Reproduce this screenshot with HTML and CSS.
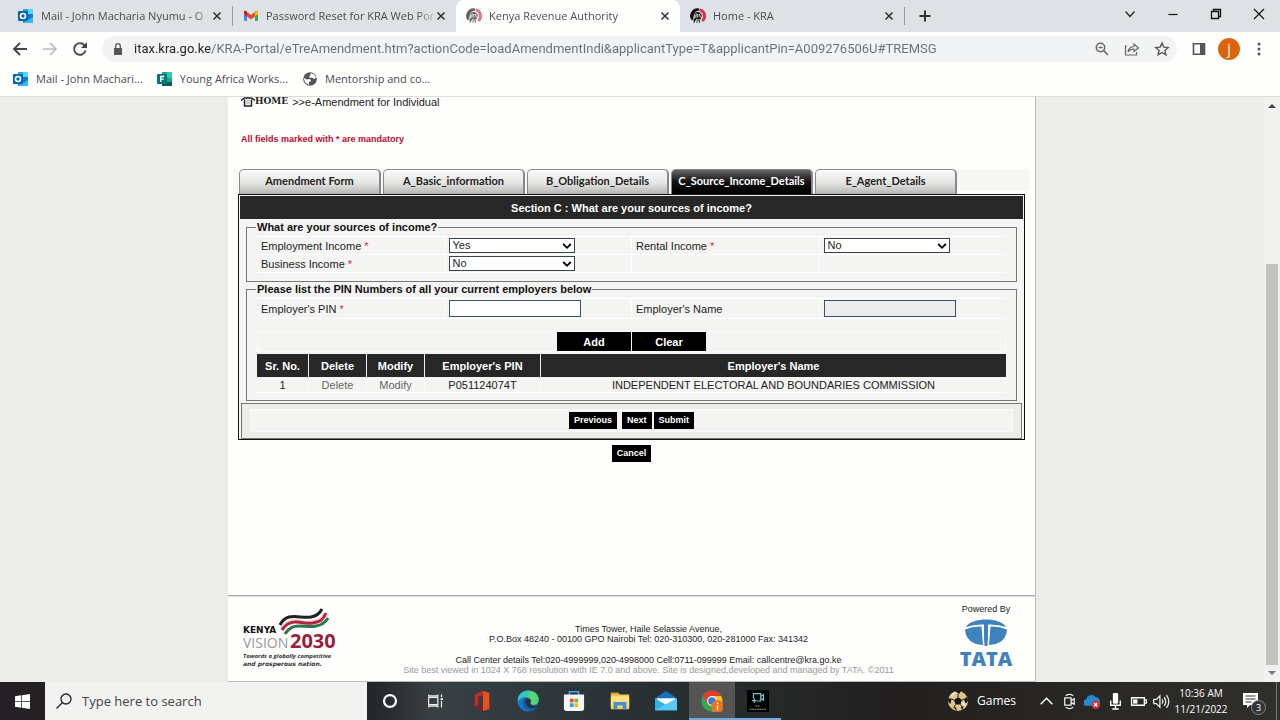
FILE: index.html
```html
<!DOCTYPE html>
<html lang="en">
<head>
<meta charset="utf-8">
<meta name="viewport" content="width=device-width, initial-scale=1">
<title>Kenya Revenue Authority</title>
<link rel="stylesheet" href="styles.css">
</head>
<body>
<svg class="defs" aria-hidden="true">
  <symbol id="outlook" viewBox="0 0 16 16">
    <path d="M5 1h10v14H5z" fill="#1490df"/><path d="M10 1h5v5h-5z" fill="#50d9ff"/><path d="M5 1h5v5H5z" fill="#28a8ea"/><path d="M10 6h5v5h-5z" fill="#0f78d4"/><path d="M5 15l10-6v6z" fill="#35b8f1"/>
    <rect y="3" width="10" height="10" rx="1" fill="#0364b8"/><circle cx="5" cy="8" r="2.5" fill="none" stroke="#fff" stroke-width="1.6"/>
  </symbol>
  <symbol id="kra" viewBox="0 0 16 16">
    <path d="M9 .5A7.500 7.500 0 0 0 2 12.800L3.500 10 4 6.500 6 3.500 9 2.500z" fill="#111"/>
    <path d="M9.500 .5a7.500 7.500 0 0 1 3.500 13.500L11.500 12l1.500-3-.5-3.500L9.500 3z" fill="#d8304f"/>
    <path d="M5 5.500 6.500 4 9 4l2.500 2.500L12 9l-1.500-.5.5 3-1.500-1 .5 5-2-3-1 3-1-3-2.500 3 .5-4L3 13z" fill="#111"/>
    <path d="M4.800 7 3.800 11M6.300 5.500 5.800 10m2-4v3.500M9.300 6l1 3M6.500 11l-.8 3m2.300-3v3" stroke="#fff" stroke-width=".9" fill="none"/>
  </symbol>
  <symbol id="cross" viewBox="0 0 10 10"><path d="M1.500 1.500l7 7m0-7l-7 7" stroke="currentColor" stroke-width="1.600" fill="none"/></symbol>
  <symbol id="arrow" viewBox="0 0 10 8"><path d="M1.200 2 5 5.800 8.800 2" stroke="#000" stroke-width="1.800" fill="none"/></symbol>
</svg>

<header class="tabstrip">
  <div class="tab"><svg class="i16"><use href="#outlook"/></svg><span class="tab-title">Mail - John Macharia Nyumu - O</span><button class="close" aria-label="Close tab"><svg><use href="#cross"/></svg></button></div>
  <div class="tab split"><svg class="i16" viewBox="0 0 16 16"><path d="M1 3h3v10H2a1 1 0 0 1-1-1z" fill="#4285f4"/><path d="M12 3h3v9a1 1 0 0 1-1 1h-2z" fill="#34a853"/><path d="M12 4l1.300-1q1.700-.6 1.700 1v2l-3 2.500z" fill="#fbbc04"/><path d="M1 6V4q0-1.600 1.700-1L8 7l4-3v4.500L8 11.500 4 8.500z" fill="#ea4335"/><path d="M1 6V4q0-1.600 1.700-1L4 4v4.500z" fill="#c5221f"/></svg><span class="tab-title">Password Reset for KRA Web Por</span><button class="close" aria-label="Close tab"><svg><use href="#cross"/></svg></button></div>
  <div class="tab active"><svg class="i16 faded"><use href="#kra"/></svg><span class="tab-title">Kenya Revenue Authority</span><button class="close" aria-label="Close tab"><svg><use href="#cross"/></svg></button></div>
  <div class="tab"><svg class="i16"><use href="#kra"/></svg><span class="tab-title">Home - KRA</span><button class="close" aria-label="Close tab"><svg><use href="#cross"/></svg></button></div>
  <button class="newtab" aria-label="New tab"><svg viewBox="0 0 12 12"><path d="M6 .5v11M.5 6h11" stroke="#333" stroke-width="2"/></svg></button>
  <div class="window-buttons">
    <button aria-label="Search tabs"><svg viewBox="0 0 12 12"><path d="M1.500 3.500 6 8.500l4.500-5" fill="none" stroke="#222" stroke-width="1.200"/></svg></button>
    <button aria-label="Minimize"><svg viewBox="0 0 12 12"><path d="M1.500 6.500h9" stroke="#111" stroke-width="1.200"/></svg></button>
    <button aria-label="Restore"><svg viewBox="0 0 12 12"><path d="M1.500 3.500h7v7h-7zM3.500 3.500v-2h7v7h-2" fill="none" stroke="#111" stroke-width="1.300"/></svg></button>
    <button aria-label="Close"><svg viewBox="0 0 12 12"><path d="M1 1l10 10M11 1 1 11" stroke="#111" stroke-width="1.200"/></svg></button>
  </div>
</header>

<nav class="toolbar">
  <button aria-label="Back"><svg viewBox="0 0 16 16"><path d="M15 8H2.500M8 2 2 8l6 6" fill="none" stroke="#444" stroke-width="1.800"/></svg></button>
  <button aria-label="Forward"><svg viewBox="0 0 16 16"><path d="M1 8h12.500M8 2l6 6-6 6" fill="none" stroke="#bbb" stroke-width="1.600"/></svg></button>
  <button aria-label="Reload"><svg viewBox="0 0 16 16"><path d="M13.500 9.500A5.800 5.800 0 1 1 12.400 4.300L14 6" fill="none" stroke="#444" stroke-width="1.900"/><path d="M15 1v6H9z" fill="#444"/></svg></button>
  <div class="omnibox">
    <svg class="lock" viewBox="0 0 10 12"><path d="M1 5h8v7H1z" fill="#555"/><path d="M2.700 5V3a2.300 2.300 0 0 1 4.600 0v2" fill="none" stroke="#555" stroke-width="1.300"/></svg>
    <input class="url" aria-label="Address" value="itax.kra.go.ke/KRA-Portal/eTreAmendment.htm?actionCode=loadAmendmentIndi&amp;applicantType=T&amp;applicantPin=A009276506U#TREMSG">
    <button aria-label="Zoom"><svg viewBox="0 0 16 16"><circle cx="6.500" cy="6.500" r="4.200" fill="none" stroke="#666" stroke-width="1.500"/><path d="M9.800 9.800 14 14M4.500 6.500h4" stroke="#666" stroke-width="1.600"/></svg></button>
    <button aria-label="Share"><svg viewBox="0 0 16 16"><path d="M3 5H1.500v9h11v-3M4 11q.5-5 6-5.500V3l4.500 4L10 10.500V8Q6 8 4 11z" fill="none" stroke="#666" stroke-width="1.200"/></svg></button>
    <button aria-label="Bookmark"><svg viewBox="0 0 16 16"><path d="M8 2l1.800 4.100 4.400.4-3.300 3 1 4.300L8 11.500l-3.900 2.300 1-4.300-3.300-3 4.400-.4z" fill="none" stroke="#555" stroke-width="1.400"/></svg></button>
  </div>
  <button aria-label="Side panel"><svg viewBox="0 0 16 16"><path d="M2.500 2.800h11v10.400h-11z" fill="none" stroke="#555" stroke-width="1.600"/><path d="M9 2h5v12H9z" fill="#555"/></svg></button>
  <button class="avatar" aria-label="Profile">j</button>
  <button class="more" aria-label="Menu"><svg viewBox="0 0 16 16"><g fill="#555"><circle cx="8" cy="3" r="1.500"/><circle cx="8" cy="8" r="1.500"/><circle cx="8" cy="13" r="1.500"/></g></svg></button>
</nav>

<nav class="bookmarks">
  <a href="#"><svg class="i16"><use href="#outlook"/></svg>Mail - John Machari...</a>
  <a href="#"><svg class="i16" viewBox="0 0 16 16"><path d="M5 1h10v14H5z" fill="#1fa187"/><path d="M10 1h5v6h-5z" fill="#37c6a2"/><path d="M5 11h10v4H5z" fill="#085d53"/><rect y="3" width="10" height="10" rx="1" fill="#03787c"/><path d="M3.700 11V5.500h3.500M3.700 8.200h3" stroke="#fff" stroke-width="1.300" fill="none"/></svg>Young Africa Works...</a>
  <a href="#"><svg class="i16" viewBox="0 0 16 16"><circle cx="8" cy="8" r="6.800" fill="#555"/><path d="M2 7l3 1.500 3-.5 1 2-2 1v2.500Q2 12.500 2 7zM8 2.500Q12.500 2 14 6.500L12 8l-2-1.500-2 .5-1-1.500 1.500-1z" fill="#fff"/></svg>Mentorship and co...</a>
</nav>

<div class="viewport">
  <main class="page">
    <section class="content">
      <div class="crumb"><svg viewBox="0 0 14 10"><path d="M0 3.500 3.500 1h7L14 3.500M3.500 2.500v6.500h7V2.500" fill="none" stroke="#222" stroke-width="1.500"/><path d="M5 2.500h4v5H5z" fill="#ccc"/></svg><a href="#" class="home">HOME</a><span>&gt;&gt;e-Amendment for Individual</span></div>
      <p class="mandatory">All fields marked with * are mandatory</p>

      <div class="form-tabs">
        <button>Amendment Form</button>
        <button>A_Basic_information</button>
        <button>B_Obligation_Details</button>
        <button class="current">C_Source_Income_Details</button>
        <button>E_Agent_Details</button>
      </div>

      <form class="panel">
        <h1>Section C : What are your sources of income?</h1>
        <fieldset class="income">
          <legend>What are your sources of income?</legend>
          <div class="grid">
            <div><label for="emp">Employment Income <b>*</b></label></div>
            <div><span class="pick"><select id="emp"><option>Yes</option><option>No</option></select><svg><use href="#arrow"/></svg></span></div>
            <div><label for="rent">Rental Income <b>*</b></label></div>
            <div><span class="pick"><select id="rent"><option>No</option><option>Yes</option></select><svg><use href="#arrow"/></svg></span></div>
            <div><label for="bus">Business Income <b>*</b></label></div>
            <div><span class="pick"><select id="bus"><option>No</option><option>Yes</option></select><svg><use href="#arrow"/></svg></span></div>
            <div></div>
            <div></div>
          </div>
        </fieldset>
        <fieldset class="employers">
          <legend>Please list the PIN Numbers of all your current employers below</legend>
          <div class="grid tall">
            <div><label for="pin">Employer's PIN <b>*</b></label></div>
            <div><input id="pin" type="text"></div>
            <div><label for="ename">Employer's Name</label></div>
            <div><input id="ename" type="text" class="locked" readonly></div>
          </div>
          <div class="actions"><button type="button">Add</button><button type="button">Clear</button></div>
          <table>
            <colgroup><col class="c1"><col class="c2"><col class="c2"><col class="c3"><col></colgroup>
            <thead><tr><th>Sr. No.</th><th>Delete</th><th>Modify</th><th>Employer's PIN</th><th>Employer's Name</th></tr></thead>
            <tbody><tr><td>1</td><td><a href="#">Delete</a></td><td><a href="#">Modify</a></td><td>P051124074T</td><td>INDEPENDENT ELECTORAL AND BOUNDARIES COMMISSION</td></tr></tbody>
          </table>
        </fieldset>
        <div class="nav-row"><div><button type="button" class="prev">Previous</button><button type="button">Next</button><button type="button">Submit</button></div></div>
      </form>
      <div class="cancel"><button type="button">Cancel</button></div>
    </section>

    <footer class="footer">
      <svg class="vision" viewBox="0 0 98 62" role="img" aria-label="Kenya Vision 2030">
        <g fill="none">
          <path d="M37 17c7-14 20-6 31-8 6-1 9-4 11-8" stroke="#222" stroke-width="3"/>
          <path d="M38 20c9-14 21-5 31-7 6-1 9-3 12-8" stroke="#e3b5bb" stroke-width="1"/>
          <path d="M39 22c9-14 21-5 31-7 7-1 10-3 13-10" stroke="#b8223c" stroke-width="3"/>
          <path d="M42 26c9-14 21-5 31-8 6-1 9-3 12-8" stroke="#287a4a" stroke-width="3"/>
        </g>
        <text x="0" y="25" class="kenya">KENYA</text>
        <text x="0" y="40" class="vis">VISION</text>
        <text x="47" y="40" class="year">2030</text>
        <text x="0" y="50" class="motto">Towards a globally competitive</text>
        <text x="0" y="58" class="motto wide">and prosperous nation.</text>
      </svg>
      <div class="address">
        <p>Times Tower, Haile Selassie Avenue,</p>
        <p>P.O.Box 48240 - 00100 GPO Nairobi Tel: 020-310300, 020-281000 Fax: 341342</p>
        <p class="gap">Call Center details Tel:020-4999999,020-4998000 Cell:0711-099999 Email: callcentre@kra.go.ke</p>
        <p class="dim">Site best viewed in 1024 X 768 resolution with IE 7.0 and above. Site is designed,developed and managed by TATA. ©2011</p>
      </div>
      <div class="powered">
        <span>Powered By</span>
        <svg viewBox="0 0 60 58" role="img" aria-label="TATA">
          <path d="M10 10C15 0 45 0 50 10q-9-3-18-2.500V28q0 1-2 1t-2-1V7.500Q19 7 10 10z" fill="#3f82bd"/>
          <path d="M9 12.500q8-3.500 16.500-3L27 28Q10 27 9 12.500zM51 12.500q-8-3.500-16.500-3L33 28q17-1 18-15.500z" fill="#3f82bd"/>
          <path d="M26.800 9.500 28 28.500M33.200 9.500 32 28.500" stroke="#fff" stroke-width="1"/>
          <text x="30" y="49" class="tata">TATA</text>
        </svg>
      </div>
    </footer>
  </main>
  <div class="scroll"><svg viewBox="0 0 8 5"><path d="M0 5l4-4 4 4z" fill="#444"/></svg><div class="track"><div class="thumb"></div></div><svg viewBox="0 0 8 5"><path d="M0 0l4 4 4-4z" fill="#777"/></svg></div>
</div>

<footer class="taskbar">
  <button class="start" aria-label="Start"><svg viewBox="0 0 16 16"><path d="M0 2.300 6.500 1.400v6.200H0zM7.300 1.300 16 0v7.600H7.300zM0 8.400h6.500v6.200L0 13.700zM7.300 8.400H16V16l-8.700-1.300z" fill="#fff"/></svg></button>
  <label class="search"><svg viewBox="0 0 16 16"><circle cx="10" cy="6" r="5" fill="none" stroke="#222" stroke-width="1.300"/><path d="M6.500 9.500.5 15.500" stroke="#222" stroke-width="1.300"/></svg><input type="text" placeholder="Type here to search" aria-label="Search"></label>
  <div class="apps">
    <button aria-label="Cortana"><svg viewBox="0 0 24 24"><circle cx="12" cy="12" r="6.500" fill="none" stroke="#fff" stroke-width="2.400"/></svg></button>
    <button aria-label="Task view"><svg viewBox="0 0 24 24"><path d="M4 8h10v8H4zM4 5v1.500h10V5M4 19v-1.500h10V19M18 5v3m0 4v7" fill="none" stroke="#eee" stroke-width="1.300"/><path d="M17 9h2.500v2H17z" fill="#fff"/></svg></button>
    <button aria-label="Office"><svg viewBox="0 0 24 24"><path d="M13 1l7 2v18l-7 2z" fill="#e8501e"/><path d="M13 1 4 5v13l4-2V7l5-1.500z" fill="#c52c24"/><path d="M4 18l9 5v-3l-7-3z" fill="#a31520"/></svg></button>
    <button aria-label="Edge"><svg viewBox="0 0 24 24"><circle cx="12" cy="12" r="11.500" fill="#1777c9"/><path d="M1 9C4-3 24-2 23.500 11c0 5-6 6-8.500 4 2-4-1-7-5-7-4 0-8 2-9.200 5z" fill="#37c5bd"/><path d="M14 1c7 1 10 6 9.500 10 0 5-6 6-8.500 4 2-4-1-6-4-7z" fill="#55d675"/><path d="M8 9c-5 6 0 14 8 13.500 3-.5 5-2 6-4-5 2-10 0-11-4-.5-3 1-4 2-4.500z" fill="#155ca8"/><path d="M11 9c-3 2-2 8 2 10 3 1 6 1 9-1 1-2 0-1-1-1-4 1-8-2-6-4 1-3-2-4-4-4z" fill="#263238"/></svg></button>
    <button aria-label="Store"><svg viewBox="0 0 24 24"><path d="M7 6V2h10v4" fill="none" stroke="#3aaee5" stroke-width="1.600"/><path d="M1 5h22v15q0 3-3 3H4q-3 0-3-3z" fill="#f5f5f5"/><path d="M7.500 9.500h4v4h-4z" fill="#e74c25"/><path d="M12.500 9.500h4v4h-4z" fill="#7bb52d"/><path d="M7.500 14.500h4v4h-4z" fill="#2a9fe0"/><path d="M12.500 14.500h4v4h-4z" fill="#f5b700"/></svg></button>
    <button aria-label="File Explorer"><svg viewBox="0 0 24 24"><path d="M2 3h8l2 2h10v16H2z" fill="#f3ca55"/><path d="M2 3h8l1 2H2z" fill="#d79d21"/><path d="M2 7h20v11H2z" fill="#ffdf7d"/><path d="M5 13h14v8h-4v-4H9v4H5z" fill="#3f92cf"/></svg></button>
    <button aria-label="Mail"><svg viewBox="0 0 24 24"><path d="M0 9 12 1l12 8v13H0z" fill="#1570bd"/><path d="M2 9h20v8H2z" fill="#fff"/><path d="M0 9l12 7 12-7v13H0z" fill="#31b2e9"/><path d="M0 22 24 9v13z" fill="#57c9f5"/></svg></button>
    <button class="open lit" aria-label="Chrome"><svg viewBox="0 0 24 24"><circle cx="12" cy="12" r="11.500" fill="#35a853"/><path d="M2 6.300A11.500 11.500 0 0 1 22 6.500L12 12l-5 3z" fill="#e33b2e"/><path d="M12 6.500h10A11.500 11.500 0 0 1 12 23.500l5-9z" fill="#fbc116"/><circle cx="12" cy="12" r="5.400" fill="#fff"/><circle cx="12" cy="12" r="4.200" fill="#3478e5"/><circle cx="18" cy="18" r="7" fill="#e87517"/><path d="M18 17v5" stroke="#fff" stroke-width="1.600"/><circle cx="18" cy="14.500" r="1" fill="#fff"/></svg></button>
    <button class="open" aria-label="Screen Recorder"><svg viewBox="0 0 24 24"><path d="M0 0h24v24H0z" fill="#000"/><path d="M7 9V4h8v8h-4m4-5 3-2v6l-3-2M8 9v5M5.500 11.500h5" fill="none" stroke="#6cc9d3" stroke-width="1.300"/><path d="M9 17.500h5M3 21h18" stroke="#aaa" stroke-width="1" stroke-dasharray="2 .6"/></svg></button>
  </div>
  <div class="tray">
    <button class="games"><svg viewBox="0 0 22 22"><circle cx="11" cy="11" r="10" fill="#dfc68c"/><path d="M11 7l4 3-1.500 4.500h-5L7 10zM8 1h6l-2 3zM1.500 8l3 1-1 5Q0 11 1.500 8zM20 7l-3 2 1.500 5 2.500-3zM6 17l3 .5 1 3.500zM14 17l3-1-2 4.500z" fill="#171717"/><path d="M11 4v3M7 10l-3-1m11 1 2-1m-3.500 5.500L15 17m-6.500-2.500L7 17" stroke="#222" stroke-width="1"/><path d="M3 5q4-4 7-3L5 7zM14 12l6 1-3 5z" fill="#fff" opacity=".5"/></svg>Games</button>
    <div class="status">
      <svg viewBox="0 0 16 16"><path d="M2.500 10.500 8 5l5.500 5.500" fill="none" stroke="#fff" stroke-width="1.400"/></svg>
      <svg viewBox="0 0 16 16"><path d="M3.500 4.500h6v7h-6zm6 2.500 3-1.500v5L9.500 9M4.500 2.500Q8 0 11.500 2.500m-7 11Q8 16 11.500 13.500" fill="none" stroke="#eee" stroke-width="1.200"/></svg>
      <svg viewBox="0 0 16 16"><path d="M2 12a3 3 0 0 1 0-6 5 5 0 0 1 9-2q4 0 4 5v3z" fill="#238bd2"/><circle cx="11" cy="11" r="4" fill="#d92e35"/><path d="M9.500 9.500l3 3m0-3-3 3" stroke="#fff" stroke-width="1.200"/></svg>
      <svg viewBox="0 0 16 16"><rect x="5.500" y="0" width="5" height="10" rx="1" fill="#fff"/><path d="M3.500 7v4.500h9V7M8 12v3M5 15h6" fill="none" stroke="#fff" stroke-width="1.300"/></svg>
      <svg viewBox="0 0 16 16"><path d="M1.500 4.500h12v7h-12zM14 6.500h1.500v3H14" fill="none" stroke="#fff" stroke-width="1.300"/><path d="M3 6h4v4H3z" fill="#fff"/></svg>
      <svg viewBox="0 0 16 16"><path d="M.7 6h2.500L6.500 2.700v10.600L3.200 10H.7zM8.500 6q1.500 2 0 4m2-6q3 4 0 8m2.200-10q4.300 6 0 12" fill="none" stroke="#eee" stroke-width="1.200"/></svg>
    </div>
    <div class="clock"><time>10:36 AM</time><time>11/21/2022</time></div>
    <button class="notice" aria-label="3 notifications"><svg viewBox="0 0 18 18"><path d="M1 1h15v12H8l-3 3v-3H1z" fill="#fff"/><path d="M3.500 4h10m-10 3h10m-10 3h6" stroke="#333" stroke-width="1"/></svg><span>3</span></button>
  </div>
</footer>
</body>
</html>
```
FILE: styles.css
```css
* { box-sizing: border-box; }
html, body { height: 100%; }
body { margin: 0; display: flex; flex-direction: column; overflow: hidden; background: #fefefc; color: #222; font: 11px/16px "Liberation Sans", Arial, sans-serif; }
button { margin: 0; padding: 0; border: 0; background: none; color: inherit; font: inherit; }
svg { display: block; flex: none; }
a { color: inherit; text-decoration: none; }
p, h1 { margin: 0; }
.defs { position: absolute; width: 0; height: 0; }
.i16 { width: 16px; height: 16px; }
.faded { opacity: .65; }

.tabstrip, .toolbar, .bookmarks { flex: none; display: flex; align-items: center; color: #494c50; font-family: "Open Sans", "Noto Sans", sans-serif; font-size: 11px; }
.tabstrip { height: 32px; padding-left: 8px; background: #dee1e5; }
.tab { flex: 0 1 224px; min-width: 0; height: 32px; padding: 0 10px; display: flex; align-items: center; gap: 7px; }
.tab.split { border-left: 1px solid transparent; border-image: linear-gradient(transparent 7px, #999 7px, #999 25px, transparent 25px) 1; }
.tab.active { background: #fefefc; border-radius: 8px 8px 0 0; }
.tab-title { flex: 1; overflow: hidden; white-space: nowrap; -webkit-mask-image: linear-gradient(90deg, #000 90%, rgba(0,0,0,.2)); mask-image: linear-gradient(90deg, #000 90%, rgba(0,0,0,.2)); }
.close { margin-left: -5px; }
.close svg { width: 10px; height: 10px; color: #333; }
.newtab { height: 18px; padding: 0 14px; border-left: 1px solid #999; }
.newtab svg, .window-buttons svg { width: 12px; height: 12px; }
.window-buttons { margin-left: auto; display: flex; padding-bottom: 4px; }
.window-buttons button { width: 43px; height: 20px; display: grid; place-items: center; }

.toolbar { height: 33px; padding: 0 6px 0 5px; }
.toolbar > button, .omnibox button { width: 30px; height: 26px; display: grid; place-items: center; }
.toolbar svg { width: 16px; height: 16px; }
.omnibox { flex: 1; min-width: 0; height: 26px; margin: 0 7px; padding: 0 0 0 10px; display: flex; align-items: center; border-radius: 13px; background: #f1f3f4; }
.omnibox .lock { width: 12px; height: 12px; margin-right: 10px; }
.url { flex: 1; min-width: 0; padding: 0; border: 0; color: transparent; background: linear-gradient(90deg, #222 76px, #6a6e72 76px) text; -webkit-background-clip: text; font: 13px/20px Roboto, "Open Sans", sans-serif; }
.toolbar > .avatar { width: 22px; height: 22px; margin: 0 4px; border-radius: 50%; background: #de640b; color: #fff; font-size: 14px; line-height: 20px; }

.bookmarks { height: 32px; padding: 0 13px 4px; gap: 14px; border-bottom: 1px solid #dcdcda; }
.bookmarks a { display: flex; align-items: center; gap: 7px; white-space: nowrap; }

.viewport { flex: 1; min-height: 0; display: flex; background: #ecece9; }
.page { flex: 0 1 808px; margin: 0 auto; display: flex; flex-direction: column; background: #fefefc; border-right: 1px solid #bbb; overflow: hidden; }
.content { flex: 1; padding: 0 10px; border-bottom: 1px solid #aaa; }
.crumb { display: flex; align-items: center; height: 9px; padding-left: 3px; color: #222; white-space: nowrap; }
.crumb svg { width: 14px; height: 10px; }
.home { margin-right: 4px; font: bold 9px/11px "DejaVu Serif", serif; }
.mandatory { padding: 25px 0 22px 3px; color: #c00a2c; font-size: 9px; line-height: 16px; font-weight: bold; }

.form-tabs { display: flex; gap: 2px; margin: 0 -5px; padding: 0 6px; background: linear-gradient(#f7f7f5 22px, transparent 22px); }
.form-tabs button { flex: 0 1 142px; height: 25px; padding-bottom: 3px; border: 1px solid #888; border-right-width: 2px; border-bottom: 0; border-radius: 5px 5px 0 0; background: linear-gradient(#fafafa, #e4e4e2 55%, #b4b4b2); box-shadow: inset 0 1px #fff; color: #222; font: bold 11px/20px Lato, "Open Sans", sans-serif; }
.form-tabs .current { background: linear-gradient(#666, #111 50%, #000); box-shadow: none; color: #fff; }

.panel { border: 1px solid #111; padding: 1px 1px 0; background: #f4f4f2; }
.panel h1 { height: 23px; margin-bottom: 1px; background: #272727; color: #fff; font-size: 11px; line-height: 24px; text-align: center; }
fieldset { min-width: 0; margin: 0 6px; padding: 0 10px; border: 1px solid #777; }
legend { padding: 0 1px; margin-left: -1px; color: #111; font-weight: bold; line-height: 14px; }
.income { padding-bottom: 8px; }
.employers { padding-bottom: 7px; }
.grid { display: grid; grid-template-columns: repeat(4, 1fr); gap: 1px; margin-top: 2px; padding: 1px 0; background: #fefefe; }
.grid > div { height: 17px; padding-left: 4px; display: flex; align-items: center; background: #f4f4f2; }
.grid.tall > div { height: 19px; }
.grid b { color: #d22b3b; font-weight: normal; }
.pick { position: relative; width: 126px; height: 15px; }
.pick svg { position: absolute; right: 3px; top: 4px; width: 10px; height: 8px; pointer-events: none; }
select { appearance: none; display: block; width: 100%; height: 15px; padding: 0 3px; border: 1px solid #36434f; border-radius: 0; background: #fff; color: #222; font: 11px/13px "Liberation Sans", Arial, sans-serif; }
.grid input { width: 132px; height: 17px; border: 1px solid #36536b; border-radius: 0; background: #fff; font: inherit; }
.grid .locked { background: #ececec; }

.actions { display: flex; justify-content: center; gap: 1px; margin: 12px 0 2px; border: 1px solid #fafaf9; }
.actions button { width: 74px; height: 19px; background: #000; color: #fff; font-weight: bold; }
table { width: 100%; table-layout: fixed; border-collapse: separate; border-spacing: 0; text-align: center; }
.c1 { width: 51px; }
.c2 { width: 58px; }
.c3 { width: 116px; }
th { height: 23px; padding: 0; background: #272727; color: #fff; border-left: 1px solid #eee; }
td { height: 16px; padding: 0; line-height: 14px; color: #222; border-left: 1px solid #fbfbfb; border-bottom: 1px solid #fff; white-space: nowrap; }
th:first-child, td:first-child { border-left: 0; }
td a { color: #666; }
.nav-row { margin: 2px 1px 0; padding: 5px 8px 6px; border: 1px solid #777; background: #ecece9; }
.nav-row > div { display: flex; justify-content: center; gap: 2px; padding: 2px 0; background: #f4f4f2; border: 1px solid #fafafa; }
.nav-row button, .cancel button { height: 17px; padding: 0 5px; background: #000; color: #fff; font-size: 9px; font-weight: bold; line-height: 17px; }
.nav-row .prev { margin-right: 3px; }
.cancel { display: flex; justify-content: center; padding-top: 5px; }

.footer { flex: none; height: 86px; padding: 6px 19px 0 15px; display: grid; grid-template-columns: 98px 1fr 60px; border-top: 1px solid #ddd; border-bottom: 1px solid #bbb; font-size: 9px; line-height: 10px; color: #222; }
.vision { width: 98px; height: 62px; margin-top: 5px; }
.kenya { font: bold 9px "DejaVu Sans", sans-serif; fill: #111; }
.vis { font: 14px "Open Sans", sans-serif; fill: #999; }
.year { font: bold 20px "Open Sans", sans-serif; fill: #981f39; }
.motto { font: italic bold 6px "Open Sans", sans-serif; fill: #333; }
.motto.wide { font-family: "DejaVu Sans", sans-serif; }
.address { padding-top: 21px; text-align: center; white-space: nowrap; }
.gap { padding-top: 11px; }
.dim { color: #999; }
.powered { padding-top: 1px; text-align: center; }
.powered svg { width: 60px; height: 58px; margin-top: 3px; }
.tata { font: 800 20px "Open Sans", sans-serif; fill: #3f82bd; text-anchor: middle; }

.scroll { flex: none; width: 16px; padding: 6px 2px 6px; display: flex; flex-direction: column; align-items: center; background: #f1f1ef; }
.scroll > svg { width: 8px; height: 5px; }
.track { flex: 1; width: 100%; padding-bottom: 6px; display: flex; flex-direction: column; justify-content: flex-end; }
.thumb { height: 72%; background: #c1c1c0; }

.taskbar { flex: none; height: 38px; display: flex; background: linear-gradient(90deg, #242024 0, #242628 29%, #394044 34%, #293033 50%, #22201f 70%, #312f2b); color: #fff; font-family: "Open Sans", "Noto Sans", sans-serif; }
.start { width: 45px; padding-left: 15px; }
.start svg { width: 15px; height: 15px; }
.search { flex: 0 1 322px; display: flex; align-items: center; gap: 10px; padding-left: 11px; background: #f2f2f0; }
.search svg { width: 16px; height: 16px; }
.search input { flex: 1; min-width: 0; border: 0; padding: 0; background: none; font: 13px/20px "Open Sans", "Noto Sans", sans-serif; }
.search input::placeholder { color: #444; opacity: 1; }
.apps { display: flex; }
.apps button { width: 46px; display: grid; place-items: center; }
.apps svg { width: 22px; height: 22px; }
.apps .open { box-shadow: inset 0 -2px #76a9df; }
.apps .lit { background: #555; }
.tray { margin-left: auto; display: flex; align-items: center; padding-right: 3px; }
.games { display: flex; align-items: center; gap: 8px; margin-right: 22px; font-size: 12px; }
.games svg { width: 22px; height: 22px; }
.status { display: flex; gap: 6px; }
.status svg { width: 17px; height: 17px; }
.clock { width: 62px; display: flex; flex-direction: column; align-items: center; font-size: 10px; }
.notice { position: relative; width: 45px; height: 38px; border-right: 1px solid #777; }
.notice svg { width: 18px; height: 18px; margin-left: 10px; }
.notice span { position: absolute; left: 19px; top: 18px; width: 15px; height: 15px; border: 1px solid #888; border-radius: 50%; background: #333; font-size: 9px; line-height: 13px; }
```
